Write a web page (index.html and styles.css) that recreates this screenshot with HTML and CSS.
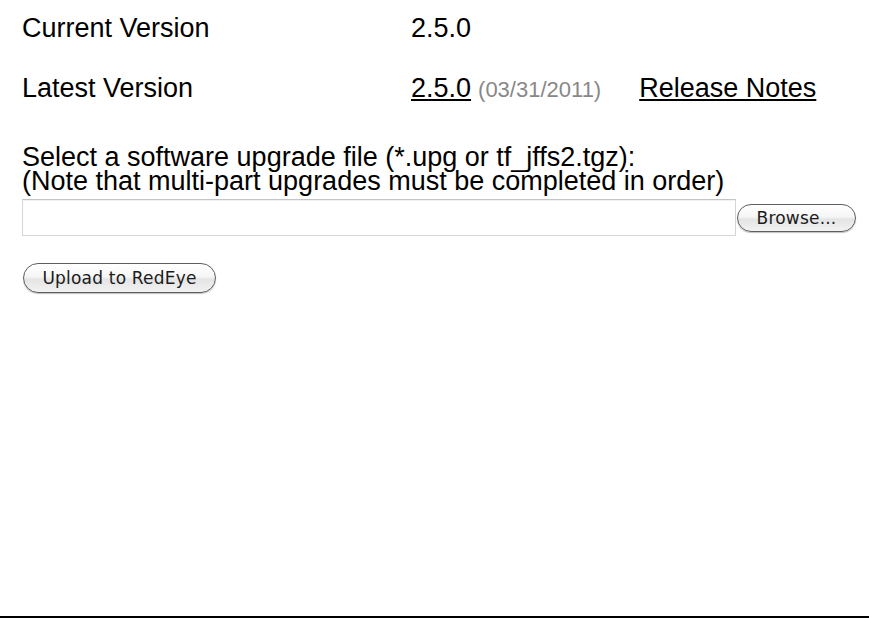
FILE: index.html
```html
<!DOCTYPE html>
<html>
<head>
<meta charset="utf-8">
<link rel="stylesheet" href="styles.css">
</head>
<body>
<div class="page">
  <div class="row">
    <div class="label">Current Version</div>
    <div class="value">2.5.0</div>
  </div>
  <div class="row">
    <div class="label">Latest Version</div>
    <div class="value"><a class="link" href="#">2.5.0</a> <span class="date">(03/31/2011)</span><a class="link notes" href="#">Release Notes</a></div>
  </div>
  <p class="select">Select a software upgrade file (*.upg or tf_jffs2.tgz):<br>(Note that multi-part upgrades must be completed in order)</p>
  <div class="filerow">
    <div class="filebox"></div>
    <button class="aqua browse" type="button">Browse...</button>
  </div>
  <button class="aqua upload" type="button">Upload to RedEye</button>
</div>
</body>
</html>
```
FILE: styles.css
```css
html, body {
  margin: 0;
  padding: 0;
  background: #fff;
}
.page {
  width: 869px;
  height: 618px;
  border-bottom: 2px solid #000;
  padding: 13px 0 0 22px;
  box-sizing: border-box;
  font-family: "Liberation Sans", Arial, sans-serif;
  font-size: 27px;
  color: #000;
}
.row {
  display: flex;
  line-height: 30px;
  height: 30px;
  margin-bottom: 30px;
}
.label {
  width: 389px;
}
.value {
  display: flex;
  align-items: baseline;
}
.link {
  color: #000;
  text-decoration: underline;
}
.date {
  color: #888;
  font-size: 22px;
  margin-left: 7px;
}
.notes {
  margin-left: 38px;
}
.select {
  margin: 42px 0 0 0;
  line-height: 24px;
}
.filerow {
  display: flex;
  align-items: center;
  margin-top: 6px;
}
.filebox {
  width: 712px;
  height: 35px;
  border: 1px solid #d6d6d6;
  border-top-color: #c4c4c4;
  box-shadow: inset 0 1px 1px rgba(0,0,0,0.06);
  background: #fff;
}
.aqua {
  font-family: "DejaVu Sans", "Lucida Grande", sans-serif;
  font-size: 17px;
  letter-spacing: 0.2px;
  color: #1b1b1b;
  border: 1px solid #5e5e5e;
  border-radius: 15px;
  background: linear-gradient(#ffffff 0%, #f6f6f6 45%, #e4e4e4 55%, #f2f2f2 100%);
  box-shadow: 0 1px 1px rgba(0,0,0,0.25);
  padding: 0;
  margin: 0;
  cursor: default;
}
.browse {
  width: 119px;
  height: 28px;
  margin-left: 1px;
}
.upload {
  display: block;
  width: 193px;
  height: 30px;
  margin-top: 27px;
  margin-left: 1px;
}
```
